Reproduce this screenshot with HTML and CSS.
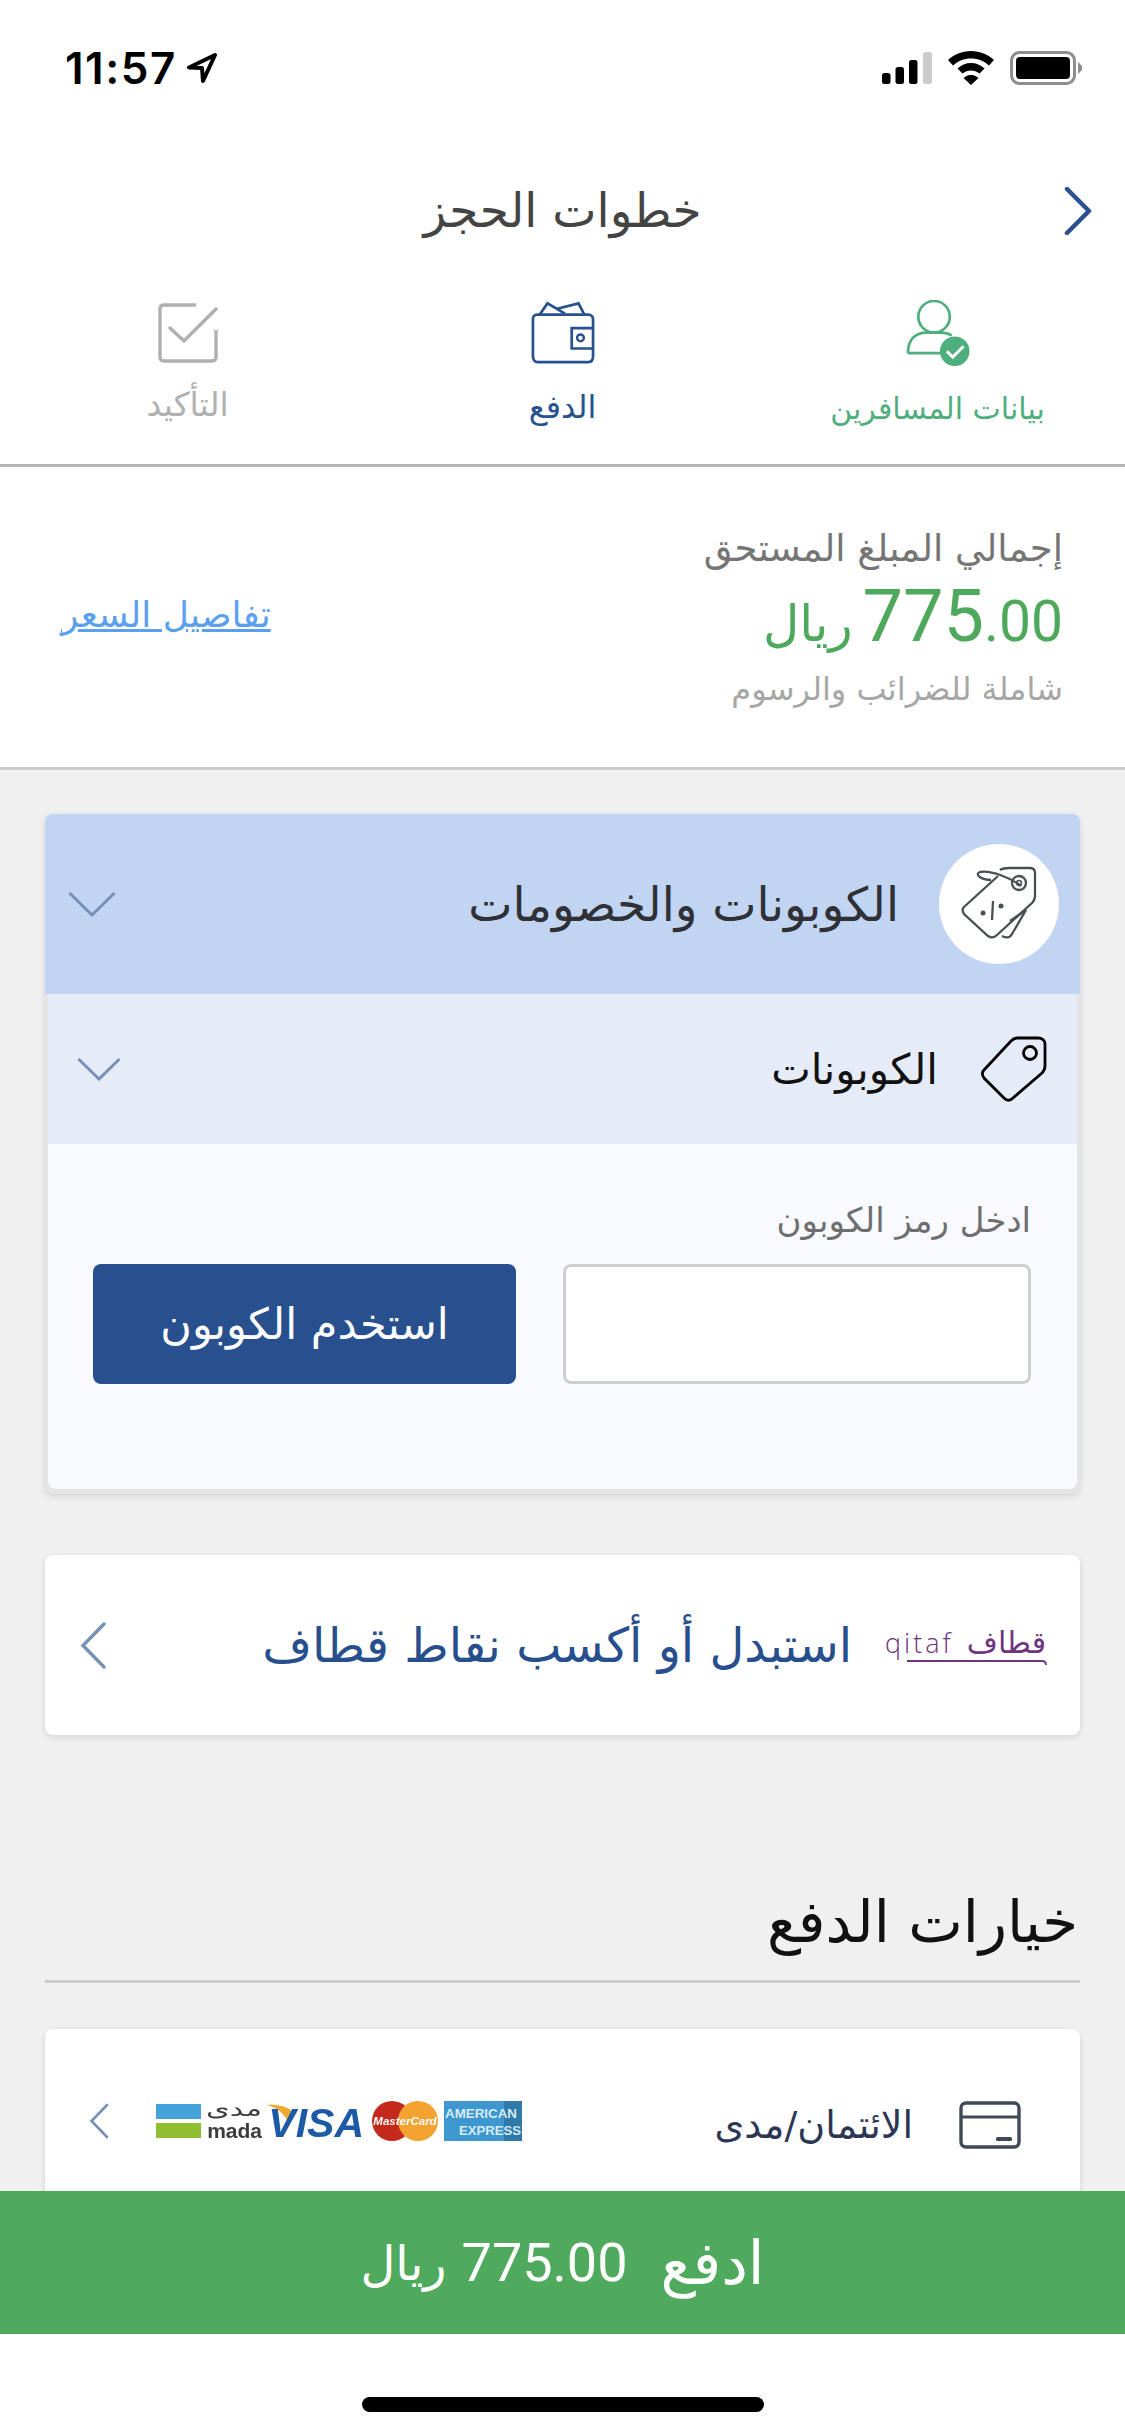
FILE: index.html
```html
<!DOCTYPE html>
<html lang="ar" dir="rtl">
<head>
<meta charset="utf-8">
<title>خطوات الحجز</title>
<link rel="stylesheet" href="styles.css">
</head>
<body>
<div class="page">
  <div class="status" dir="ltr">
    <div class="status-left">
      <span class="clock">11:57</span>
      <svg class="loc" viewBox="0 0 30 30"><path d="M28 2 L2 14.500 L15 15 L16 28 Z" fill="none" stroke="#000" stroke-width="4" stroke-linejoin="round"/></svg>
    </div>
    <div class="status-right">
      <svg class="signal" viewBox="0 0 50 32"><rect x="0" y="21" width="8.5" height="11" rx="2.5" fill="#000"/><rect x="13.5" y="15" width="8.5" height="17" rx="2.5" fill="#000"/><rect x="27" y="8" width="8.5" height="24" rx="2.5" fill="#000"/><rect x="41" y="0" width="9" height="32" rx="2.5" fill="#ccc"/></svg>
      <svg class="wifi" viewBox="0 0 48 34"><path d="M24 0 C15 0 7 3.500 1 9 L6 14.500 C11 10 17 7.500 24 7.500 C31 7.500 37 10 42 14.500 L47 9 C41 3.500 33 0 24 0 Z M24 12 C19 12 14 14 10.500 17.500 L15.500 22.500 C18 20.500 21 19.500 24 19.500 C27 19.500 30 20.500 32.500 22.500 L37.500 17.500 C34 14 29 12 24 12 Z M24 24 C22 24 19.500 24.500 16.500 27 L24 34 L31.500 27 C28.500 24.500 26 24 24 24 Z" fill="#000"/></svg>
      <svg class="batt" viewBox="0 0 72 34"><rect x="1.500" y="1.500" width="63" height="31" rx="8" fill="none" stroke="#8e8e8e" stroke-width="3"/><rect x="6" y="6" width="54" height="22" rx="4" fill="#000"/><path d="M68 11 L72 15 L72 19 L68 23 Z" fill="#8e8e8e"/></svg>
    </div>
  </div>

  <header class="topbar">
    <svg class="back" viewBox="0 0 28 48"><path d="M3 2 L25 24 L3 46" fill="none" stroke="#2a4f8f" stroke-width="4.500" stroke-linecap="round" stroke-linejoin="round"/></svg>
    <h1 class="page-title">خطوات الحجز</h1>
    <span class="topbar-spacer"></span>
  </header>

  <nav class="steps">
    <div class="step step-done">
      <svg class="step-icon" viewBox="0 0 64 67"><circle cx="28" cy="17" r="16" fill="none" stroke="#4fae7e" stroke-width="2.800"/><path d="M1.500 54 C1.500 40 9 33 20 33 L36 33 C40 33 43 34 46 36 M1.500 54 L36 54" fill="none" stroke="#4fae7e" stroke-width="2.800"/><circle cx="49" cy="52" r="15" fill="#4fae7e"/><path d="M41 52 L47 58 L58 47" fill="none" stroke="#fff" stroke-width="3"/></svg>
      <span class="step-label">بيانات المسافرين</span>
    </div>
    <div class="step step-current">
      <svg class="step-icon" viewBox="0 0 66 64"><path d="M9 13 L17 1.500 L35 12 M27 7 L49 1.500 L55 13" fill="none" stroke="#28518f" stroke-width="2.800"/><path d="M6 13 L59 13 C62 13 64 15 64 18 L64 56 C64 60 62 62 59 62 L7 62 C4 62 2 60 2 56 L2 17 C2 15 4 13 6 13 Z" fill="none" stroke="#28518f" stroke-width="2.800"/><path d="M64 27 L42 27 L42 48 L64 48" fill="none" stroke="#28518f" stroke-width="2.800"/><circle cx="51" cy="37" r="3.500" fill="none" stroke="#28518f" stroke-width="2.500"/></svg>
      <span class="step-label">الدفع</span>
    </div>
    <div class="step step-next">
      <svg class="step-icon icon-check" viewBox="0 0 60 60"><path d="M38 2 L6 2 C3.500 2 2 3.500 2 6 L2 54 C2 56.500 3.500 58 6 58 L54 58 C56.500 58 58 56.500 58 54 L58 27" fill="none" stroke="#b0b0b0" stroke-width="3.400"/><path d="M12 25 L26 38 L58 6" fill="none" stroke="#b0b0b0" stroke-width="3.400" stroke-linecap="round"/></svg>
      <span class="step-label">التأكيد</span>
    </div>
  </nav>

  <section class="summary">
    <div class="summary-main">
      <div class="summary-title">إجمالي المبلغ المستحق</div>
      <div class="amount"><bdi class="amount-num" dir="ltr"><span class="amount-big">775</span>.00</bdi> <span class="amount-cur">ريال</span></div>
      <div class="summary-note">شاملة للضرائب والرسوم</div>
    </div>
    <a class="price-link" href="#">تفاصيل السعر</a>
  </section>

  <main class="content">
    <section class="card coupons">
      <div class="coupons-head">
        <div class="tag-disc">
          <svg class="tags-icon" viewBox="0 0 76 76"><path d="M39 4 C42 2 45 2 48 2 L69 2 C72 2 74 4 74 7 L74 30 C74 33 73 35 71 37 L36 69 C33 72 30 72 27 70 L3 48 C1 45 1 43 3 41 L37 10" fill="none" stroke="#4a4f55" stroke-width="2.300"/><path d="M49 58 L65 47 L51 71 C49 75 45 75 41 73" fill="none" stroke="#4a4f55" stroke-width="2.300" transform="translate(0 -3)"/><path d="M60 20 C50 12 30 4 19 6 C13 8 20 14 30 14" fill="none" stroke="#4a4f55" stroke-width="2.300"/><circle cx="58" cy="17" r="7" fill="none" stroke="#4a4f55" stroke-width="2.300"/><circle cx="58" cy="17" r="2.500" fill="none" stroke="#4a4f55" stroke-width="1.500"/><path d="M32 35 L31 54" stroke="#4a4f55" stroke-width="2.300"/><circle cx="22" cy="47" r="2.500" fill="#4a4f55"/><circle cx="40" cy="40" r="2.500" fill="#4a4f55"/></svg>
        </div>
        <h2 class="coupons-title">الكوبونات والخصومات</h2>
        <svg class="chev-down big" viewBox="0 0 48 26"><path d="M1.500 2 L24 24 L46.500 2" fill="none" stroke="#7591b5" stroke-width="3"/></svg>
      </div>
      <div class="coupons-sub">
        <svg class="tag-icon" viewBox="0 0 66 66"><path d="M36 2 L57 2 C61 2 64 4 64 8 L64 30 C64 33 63 35 61 37 L32 62 C29 65 26 65 23 62 L3 42 C1 39 1 36 3 34 L30 5 C32 3 34 2 36 2 Z" fill="none" stroke="#000" stroke-width="2.800"/><circle cx="49" cy="17" r="6.500" fill="none" stroke="#000" stroke-width="2.800"/></svg>
        <span class="coupons-sub-title">الكوبونات</span>
        <svg class="chev-down small" viewBox="0 0 44 24"><path d="M1.500 2 L22 22 L42.500 2" fill="none" stroke="#7591b5" stroke-width="3"/></svg>
      </div>
      <div class="coupons-body">
        <label class="coupon-label" for="code">ادخل رمز الكوبون</label>
        <div class="coupon-row">
          <input class="coupon-input" id="code" type="text">
          <button class="coupon-btn" type="button">استخدم الكوبون</button>
        </div>
      </div>
    </section>

    <section class="card qitaf">
      <svg class="qitaf-logo" viewBox="0 0 162 36"><text x="0" y="23" class="qitaf-latin">qitaf</text><text x="161" y="23" class="qitaf-ar" text-anchor="end">قطاف</text><path d="M22 31 L157 31 C160 31 161 32 161 35" fill="none" stroke="#6d3581" stroke-width="1.800"/></svg>
      <span class="qitaf-title">استبدل أو أكسب نقاط قطاف</span>
      <svg class="chev-left qitaf-chev" viewBox="0 0 26 47"><path d="M24 2 L3 23.500 L24 45" fill="none" stroke="#7591b5" stroke-width="3.400" stroke-linecap="round"/></svg>
    </section>

    <h2 class="options-title">خيارات الدفع</h2>

    <section class="card pay-option">
      <svg class="card-icon" viewBox="0 0 62 48"><rect x="2" y="2" width="58" height="44" rx="5" fill="none" stroke="#3f4a55" stroke-width="3.400"/><path d="M2 16 L60 16" stroke="#3f4a55" stroke-width="3"/><rect x="37" y="36" width="16" height="4" rx="1.500" fill="#3f4a55"/></svg>
      <span class="pay-label">الائتمان/مدى</span>
      <div class="pay-right" dir="ltr">
        <svg class="chev-left pay-chev" viewBox="0 0 20 36"><path d="M18 2 L2.500 18 L18 34" fill="none" stroke="#7591b5" stroke-width="2.600" stroke-linecap="round"/></svg>
        <div class="brands">
          <svg class="brand-mada" viewBox="0 0 107 40"><rect x="0" y="3" width="45" height="15" fill="#45a3dc"/><rect x="0" y="22" width="45" height="15" fill="#8fbe30"/><text x="50" y="15" textLength="56" lengthAdjust="spacingAndGlyphs" class="mada-ar">مدى</text><text x="106" y="37" text-anchor="end" class="mada-en">mada</text></svg>
          <svg class="brand-visa" viewBox="0 0 98 40"><path d="M0 4 C9 3 19 5 25 10 L21 21 C17 12 10 7 0 4 Z" fill="#f0a830"/><text x="97" y="36" text-anchor="end" class="visa-text">VISA</text></svg>
          <svg class="brand-mc" viewBox="0 0 66 40"><circle cx="20" cy="20" r="20" fill="#c42a1c"/><circle cx="46" cy="20" r="20" fill="#f4a331"/><text x="33" y="24" text-anchor="middle" class="mc-text">MasterCard</text></svg>
          <svg class="brand-amex" viewBox="0 0 78 40"><rect width="78" height="40" fill="#3f97cf"/><rect x="60" width="18" height="40" fill="#2f7aa8"/><text x="1" y="17" textLength="72" lengthAdjust="spacingAndGlyphs" class="amex-text">AMERICAN</text><text x="15" y="34" textLength="62" lengthAdjust="spacingAndGlyphs" class="amex-text">EXPRESS</text></svg>
        </div>
      </div>
    </section>
  </main>

  <button class="pay-bar" type="button"><span class="pay-word">ادفع</span><bdi class="pay-num">775.00</bdi> <span class="pay-cur">ريال</span></button>

  <div class="home-area"><span class="home-indicator"></span></div>
</div>
</body>
</html>
```
FILE: styles.css
```css
* { box-sizing: border-box; }
html, body { margin: 0; padding: 0; background: #fff; }
body { font-family: "DejaVu Sans", sans-serif; }
h1, h2 { margin: 0; font-weight: 400; }

.page { width: 1125px; height: 2436px; display: flex; flex-direction: column; overflow: hidden; }

/* status bar */
.status { height: 136px; flex: none; display: flex; justify-content: space-between; align-items: center; padding: 0 43px 0 65px; }
.status-left { display: flex; align-items: center; gap: 10px; }
.clock { font-family: Inter, sans-serif; font-weight: 600; font-size: 44px; color: #000; letter-spacing: 1.500px; }
.loc { width: 30px; height: 30px; }
.status-right { display: flex; align-items: center; gap: 15px; }
.signal { width: 50px; height: 32px; }
.wifi { width: 48px; height: 34px; }
.batt { width: 72px; height: 34px; }

/* header */
.topbar { height: 150px; flex: none; display: grid; grid-template-columns: 1fr auto 1fr; align-items: center; padding: 0 33px; }
.back { width: 28px; height: 48px; }
.page-title { font-size: 47px; line-height: 60px; color: #444; text-align: center; }
.topbar-spacer { display: block; }

/* steps */
.steps { height: 181px; flex: none; display: grid; grid-template-columns: repeat(3, 1fr); border-bottom: 3px solid #b3b3b3; padding-top: 14px; }
.step { display: flex; flex-direction: column; align-items: center; }
.step-icon { width: 64px; height: 66px; }
.icon-check { width: 60px; height: 60px; margin-top: 3px; }
.step-label { font-size: 30px; line-height: 44px; margin-top: 21px; }
.step-done { color: #4fae7e; }
.step-current { color: #28518f; }
.step-current .step-label { font-size: 32px; margin-top: 19px; }
.step-next { color: #b0b0b0; }
.step-next .step-label { font-size: 33px; margin-top: 20px; }

/* summary */
.summary { height: 303px; flex: none; display: flex; justify-content: space-between; align-items: center; padding: 0 62px 0 61px; border-bottom: 3px solid #ccc; }
.summary-main { display: flex; flex-direction: column; }
.summary-title { font-size: 37px; line-height: 60px; color: #757575; }
.amount { font-size: 50px; color: #4fa95c; line-height: 76px; word-spacing: -6px; }
.amount-num { font-family: Roboto, sans-serif; font-size: 57px; }
.amount-big { font-size: 72px; }
.summary-note { font-size: 32px; line-height: 54px; color: #a6a6a6; }
.price-link { font-size: 36px; color: #5ba0ee; text-decoration: underline; margin-bottom: 6px; }

/* content */
.content { flex: 1; min-height: 0; overflow: hidden; background: #f0f0f0; padding: 44px 45px 0; }
.card { background: #fff; border-radius: 8px; box-shadow: 0 2px 6px rgba(0, 0, 0, .12); }

.coupons { height: 680px; overflow: hidden; background: #e4e4e4; padding: 0 3px 5px; }
.coupons-head { height: 180px; margin: 0 -3px; background: #c1d4f2; display: flex; align-items: center; padding: 0 21px 0 23px; }
.tag-disc { width: 120px; height: 120px; border-radius: 50%; background: #fff; flex: none; display: flex; align-items: center; justify-content: center; }
.tags-icon { width: 76px; height: 76px; }
.coupons-title { font-size: 47px; color: #2f3136; margin-right: 40px; flex: 1; }
.chev-down.big { width: 48px; height: 26px; }
.coupons-sub { height: 150px; background: #e5ebf7; display: flex; align-items: center; padding: 0 30px 0 29px; }
.tag-icon { width: 66px; height: 66px; flex: none; }
.coupons-sub-title { font-size: 42px; color: #111; margin-right: 43px; flex: 1; }
.chev-down.small { width: 44px; height: 24px; }
.coupons-body { height: 345px; background: #f8faff; padding: 48px 46px 0 45px; border-radius: 0 0 8px 8px; }
.coupon-label { display: block; font-size: 34px; line-height: 56px; color: #6f6f6f; height: 72px; }
.coupon-row { display: flex; justify-content: space-between; }
.coupon-input { width: 468px; height: 120px; border: 3px solid #cfcfcf; border-radius: 8px; background: #fff; }
.coupon-btn { width: 423px; height: 120px; border: 0; border-radius: 8px; background: #284f8e; color: #fff; font-family: inherit; font-size: 43px; }

.qitaf { height: 180px; margin-top: 61px; display: flex; align-items: center; padding: 0 33px 0 35px; }
.qitaf-logo { width: 162px; height: 36px; flex: none; direction: ltr; overflow: visible; margin-top: 6px; }
.qitaf-latin { font-family: "Open Sans", sans-serif; font-weight: 300; font-size: 27px; letter-spacing: 3px; fill: #6d3581; }
.qitaf-ar { font-size: 30px; fill: #6d3581; }
.qitaf-title { font-size: 48px; line-height: 70px; color: #274f8d; margin-right: 33px; flex: 1; }
.qitaf-chev { width: 26px; height: 47px; }

.options-title { font-size: 58px; color: #111; margin-top: 156px; height: 92px; line-height: 62px; border-bottom: 3px solid #ccc; padding-right: 2px; }

.pay-option { height: 220px; margin-top: 46px; display: flex; align-items: flex-start; padding: 72px 59px 0 0; }
.card-icon { width: 62px; height: 48px; flex: none; }
.pay-label { font-size: 38px; color: #2c3655; margin-right: 46px; flex: 1; line-height: 48px; }
.pay-right { display: flex; align-items: flex-start; width: 477px; padding-left: 44px; }
.pay-chev { width: 20px; height: 36px; margin-top: 2px; }
.brands { display: flex; gap: 4px; margin-left: 47px; filter: blur(.5px); }
.brands svg { overflow: visible; }
.brand-mada { width: 107px; height: 40px; }
.brand-visa { width: 98px; height: 40px; margin-right: 3px; }
.brand-mc { width: 66px; height: 40px; margin-right: 2px; }
.brand-amex { width: 78px; height: 40px; }
.mada-ar { font-size: 20px; fill: #3c3c3c; }
.mada-en { font-family: "Liberation Sans", sans-serif; font-weight: 700; font-size: 21px; fill: #3c3c3c; }
.visa-text { font-family: "Liberation Sans", sans-serif; font-weight: 700; font-style: italic; font-size: 41px; fill: #1c5aa6; }
.mc-text { font-family: "Liberation Sans", sans-serif; font-weight: 700; font-style: italic; font-size: 11.500px; fill: #fff; }
.amex-text { font-family: "Liberation Sans", sans-serif; font-weight: 700; font-size: 12px; fill: #d5ecfa; }

/* pay bar */
.pay-bar { height: 143px; flex: none; width: 100%; border: 0; background: #4faa5e; color: #fff; font-family: inherit; display: flex; align-items: center; justify-content: center; direction: rtl; }
.pay-word { font-size: 60px; }
.pay-cur { font-size: 48px; }
.pay-num { font-family: Roboto, sans-serif; font-size: 54px; margin: 0 33px 0 15px; }

.home-area { height: 102px; flex: none; background: #fff; display: flex; justify-content: center; padding-top: 63px; }
.home-indicator { width: 402px; height: 15px; border-radius: 8px; background: #000; }
```
